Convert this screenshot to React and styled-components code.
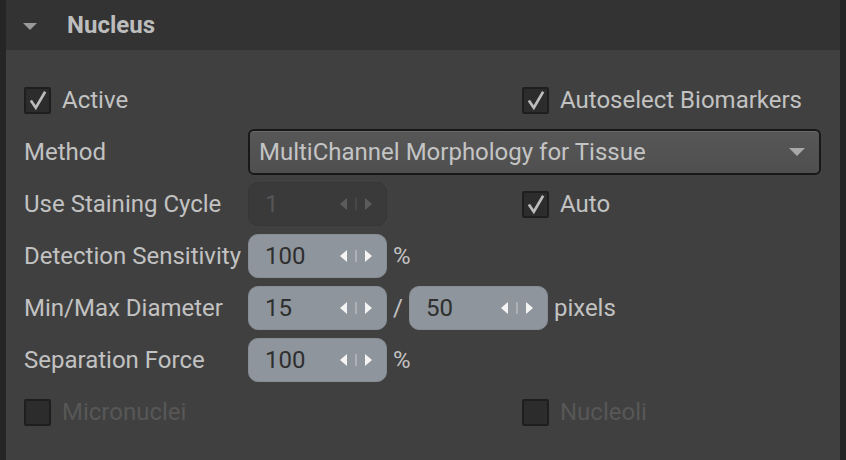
import React from "react";
import styled, { createGlobalStyle } from "styled-components";

const GlobalStyle = createGlobalStyle`
  html, body {
    margin: 0;
    padding: 0;
    background: #252525;
  }
  body {
    font-family: Roboto, "Noto Sans", "Liberation Sans", sans-serif;
  }
`;

const Frame = styled.div`
  width: 846px;
  height: 460px;
  box-sizing: border-box;
  padding: 0 6px;
  background: #252525;
`;

const Panel = styled.div`
  height: 100%;
  display: flex;
  flex-direction: column;
  background: #404040;
`;

const Header = styled.div`
  height: 50px;
  flex-shrink: 0;
  display: flex;
  align-items: center;
  gap: 30px;
  padding-left: 17px;
  background: #333333;
`;

const Caret = styled.span`
  width: 0;
  height: 0;
  border-left: 7px solid transparent;
  border-right: 7px solid transparent;
  border-top: 7px solid #9a9a9a;
  margin-top: 2px;
`;

const Title = styled.h2`
  margin: 0;
  font-size: 24px;
  font-weight: 700;
  color: #bdbdbd;
`;

const Body = styled.div`
  display: flex;
  flex-direction: column;
  gap: 6px;
  padding: 27px 19px 0 18px;
`;

const Row = styled.div`
  height: 46px;
  display: grid;
  grid-template-columns: 224px 274px 1fr;
  align-items: center;
`;

const Label = styled.span`
  font-size: 24px;
  color: ${({ $disabled }) => ($disabled ? "#575757" : "#c2c2c2")};
  white-space: nowrap;
`;

const CheckWrap = styled.label`
  display: flex;
  align-items: center;
  gap: 11px;
  grid-column: ${({ $col }) => $col || "auto"};
`;

const Box = styled.span`
  width: 27px;
  height: 27px;
  box-sizing: border-box;
  border: 2px solid #1e1e1e;
  border-radius: 2px;
  background: #2c2c2c;
  display: flex;
  align-items: center;
  justify-content: center;
`;

const Check = ({ label, checked, disabled, col }) => (
  <CheckWrap $col={col}>
    <Box>
      {checked && (
        <svg width="22" height="22" viewBox="0 0 20 20">
          <path
            d="M3.5 10.5 L8 17 L16.5 2.5"
            fill="none"
            stroke="#bcbcbc"
            strokeWidth="2.4"
            strokeLinejoin="miter"
          />
        </svg>
      )}
    </Box>
    <Label $disabled={disabled}>{label}</Label>
  </CheckWrap>
);

const Select = styled.div`
  grid-column: 2 / 4;
  height: 46px;
  box-sizing: border-box;
  border: 2px solid #181818;
  border-radius: 6px;
  background: linear-gradient(#575757, #4f4f4f);
  box-shadow: inset 0 1px 0 #6a6a6a;
  display: flex;
  align-items: center;
  justify-content: space-between;
  padding: 0 14px 0 9px;
  font-size: 24px;
  color: #c4c4c4;
`;

const SelectCaret = styled.span`
  width: 0;
  height: 0;
  border-left: 8px solid transparent;
  border-right: 8px solid transparent;
  border-top: 8px solid #a8a8a8;
`;

const Inline = styled.div`
  display: flex;
  align-items: center;
  gap: 6px;
  grid-column: 2 / 4;
`;

const Spin = styled.div`
  width: 139px;
  height: 44px;
  box-sizing: border-box;
  border-radius: 10px;
  display: flex;
  align-items: center;
  justify-content: space-between;
  padding: 0 13px 0 16px;
  font-size: 24px;
  background: ${({ $disabled }) => ($disabled ? "#3a3a3a" : "#8e959c")};
  border: 1px solid ${({ $disabled }) => ($disabled ? "#363636" : "#868d94")};
  color: ${({ $disabled }) => ($disabled ? "#565656" : "#2f2f2f")};
`;

const Arrows = styled.span`
  display: flex;
  align-items: center;
`;

const Spinner = ({ value, disabled }) => {
  const c = disabled ? "#5c5c5c" : "#f4f4f4";
  const line = disabled ? "#555" : "#c8cdd2";
  return (
    <Spin $disabled={disabled}>
      <span>{value}</span>
      <Arrows>
        <svg width="34" height="16" viewBox="0 0 34 16">
          <polygon points="8,2 8,14 1,8" fill={c} />
          <rect x="16.5" y="2" width="1" height="12" fill={line} />
          <polygon points="26,2 26,14 33,8" fill={c} />
        </svg>
      </Arrows>
    </Spin>
  );
};

const Unit = styled.span`
  font-size: 24px;
  color: #c2c2c2;
`;

export default function App() {
  return (
    <>
      <GlobalStyle />
      <Frame>
        <Panel>
          <Header>
            <Caret />
            <Title>Nucleus</Title>
          </Header>
          <Body>
            <Row>
              <Check label="Active" checked />
              <Check label="Autoselect Biomarkers" checked col="3" />
            </Row>
            <Row>
              <Label>Method</Label>
              <Select>
                <span>MultiChannel Morphology for Tissue</span>
                <SelectCaret />
              </Select>
            </Row>
            <Row>
              <Label>Use Staining Cycle</Label>
              <Spinner value="1" disabled />
              <Check label="Auto" checked />
            </Row>
            <Row>
              <Label>Detection Sensitivity</Label>
              <Inline>
                <Spinner value="100" />
                <Unit>%</Unit>
              </Inline>
            </Row>
            <Row>
              <Label>Min/Max Diameter</Label>
              <Inline>
                <Spinner value="15" />
                <Unit>/</Unit>
                <Spinner value="50" />
                <Unit>pixels</Unit>
              </Inline>
            </Row>
            <Row>
              <Label>Separation Force</Label>
              <Inline>
                <Spinner value="100" />
                <Unit>%</Unit>
              </Inline>
            </Row>
            <Row>
              <Check label="Micronuclei" disabled />
              <Check label="Nucleoli" disabled col="3" />
            </Row>
          </Body>
        </Panel>
      </Frame>
    </>
  );
}
